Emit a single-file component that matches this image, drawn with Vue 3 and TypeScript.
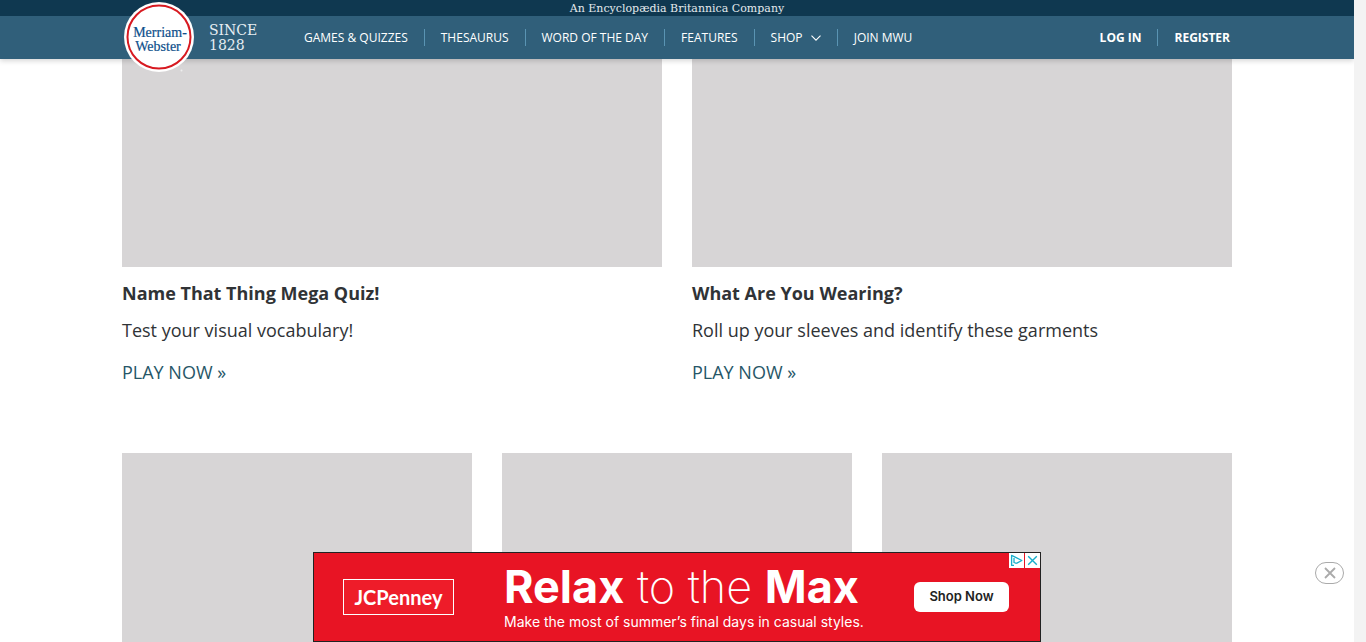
<script setup lang="ts">
import { ref } from 'vue'

interface Quiz {
  title: string
  text: string
}

const links: string[] = ['Games & Quizzes', 'Thesaurus', 'Word of the Day', 'Features', 'Shop', 'Join MWU']
const quizzes: Quiz[] = [
  { title: 'Name That Thing Mega Quiz!', text: 'Test your visual vocabulary!' },
  { title: 'What Are You Wearing?', text: 'Roll up your sleeves and identify these garments' },
]
const adOpen = ref<boolean>(true)
</script>

<template>
  <div class="page">
    <header class="header">
      <div class="tagline">An Encyclopædia Britannica Company</div>
      <div class="bar">
        <div class="inner">
          <a class="brand" href="#" aria-label="Merriam-Webster, since 1828">
            <svg class="logo" viewBox="0 0 70 72" width="70" height="72" aria-hidden="true">
              <circle cx="35" cy="35" r="35" fill="#fff" />
              <circle cx="35" cy="35" r="31.5" fill="#fff" stroke="#d71920" stroke-width="2" />
              <text x="36" y="35" text-anchor="middle" class="logo-text">Merriam-</text>
              <text x="34" y="49" text-anchor="middle" class="logo-text">Webster</text>
              <circle cx="57.500" cy="68.500" r="1" fill="#eee" />
            </svg>
            <span class="since">SINCE<br />1828</span>
          </a>
          <nav class="nav" aria-label="Main">
            <a v-for="link in links" :key="link" href="#">
              {{ link }}
              <svg v-if="link === 'Shop'" class="chevron" viewBox="0 0 10 6" width="10" height="6" aria-hidden="true">
                <path d="M.5 .6 5 5.2 9.5 .6" fill="none" stroke="#fff" stroke-width="1.1" />
              </svg>
            </a>
          </nav>
          <nav class="nav account" aria-label="Account">
            <a href="#">Log In</a>
            <a href="#">Register</a>
          </nav>
        </div>
      </div>
    </header>

    <main class="content">
      <section class="row pair">
        <article v-for="quiz in quizzes" :key="quiz.title">
          <div class="picture wide"></div>
          <h2>{{ quiz.title }}</h2>
          <p>{{ quiz.text }}</p>
          <a class="play" href="#">PLAY NOW »</a>
        </article>
      </section>
      <section class="row triple">
        <div v-for="n in 3" :key="n" class="picture"></div>
      </section>
    </main>

    <aside v-if="adOpen" class="ad" aria-label="Advertisement">
      <div class="ad-brand">JCPenney</div>
      <div class="ad-copy">
        <div class="ad-head"><b>Relax</b> to the <b>Max</b></div>
        <div class="ad-sub">Make the most of summer’s final days in casual styles.</div>
      </div>
      <a class="shop" href="#">Shop Now</a>
      <div class="choices">
        <button type="button" aria-label="About this ad">
          <svg viewBox="0 0 15 15" width="15" height="15">
            <path d="M5 12.300H2.600V2.300L12.800 7.500 7.400 10.300M5 5V9.500L7.400 10.300" fill="none" stroke="#17aecb" stroke-width="1.3" stroke-linejoin="round" />
          </svg>
        </button>
        <button type="button" aria-label="Close ad" @click="adOpen = false">
          <svg viewBox="0 0 15 15" width="15" height="15">
            <path d="m3.2 3.2 8.6 8.6m0-8.6-8.6 8.6" fill="none" stroke="#17aecb" stroke-width="1.4" />
          </svg>
        </button>
      </div>
    </aside>
    <button v-if="adOpen" class="dismiss" type="button" aria-label="Dismiss" @click="adOpen = false">
      <svg viewBox="0 0 12 12" width="12" height="12">
        <path d="m1 1 10 10M11 1 1 11" fill="none" stroke="#aaa" stroke-width="1.8" />
      </svg>
    </button>
  </div>
</template>

<style>
body {
  background: #f3f3f3;
}
</style>

<style scoped>
.page {
  position: relative;
  height: 100vh;
  margin-right: 12px;
  overflow: hidden;
  background: #fff;
  color: #303336;
  font-family: "Open Sans", sans-serif;
}
.page * {
  box-sizing: border-box;
}
a {
  color: inherit;
  text-decoration: none;
}
.header {
  position: relative;
  z-index: 2;
  color: #fff;
  box-shadow: 0 2px 5px rgba(0, 0, 0, 0.16);
}
.tagline {
  height: 16px;
  background: #0f3850;
  color: #e4eaed;
  font: 11px/18px "DejaVu Serif", serif;
  text-align: center;
}
.bar {
  height: 43px;
  background: #305f7a;
}
.inner,
.content {
  width: calc(100% - 40px);
  max-width: 1110px;
  margin: 0 auto;
}
.inner {
  display: flex;
  align-items: center;
  height: 43px;
}
.brand {
  display: flex;
  align-items: center;
  gap: 15px;
  width: 166px;
  padding-left: 2px;
}
.logo {
  flex: none;
}
.logo-text {
  fill: #0d4f8b;
  stroke: #0d4f8b;
  stroke-width: 0.2;
  font: 14px "Liberation Serif", serif;
}
.since {
  color: #e7eef2;
  font: 14px/15px "DejaVu Serif", serif;
}
.nav {
  display: flex;
  font-size: 12px;
  line-height: 17px;
  text-transform: uppercase;
}
.nav a {
  padding: 0 16px;
  white-space: nowrap;
}
.nav a + a {
  border-left: 1px solid #5a94b3;
}
.chevron {
  margin-left: 5px;
  vertical-align: 1px;
}
.account {
  margin-left: auto;
  margin-right: -14px;
  font-weight: 700;
}
.row {
  display: grid;
  gap: 30px;
}
.pair {
  grid-template-columns: repeat(2, 1fr);
}
.triple {
  grid-template-columns: repeat(3, 1fr);
  margin-top: 68px;
}
.picture {
  aspect-ratio: 16 / 9;
  background: #d7d5d6;
}
.wide {
  aspect-ratio: 540 / 208;
}
h2 {
  margin: 14px 0 0;
  font-size: 18px;
  line-height: 25px;
}
p {
  margin: 12px 0 17px;
  font-size: 18px;
  line-height: 25px;
}
.play {
  display: block;
  color: #265667;
  font-size: 18px;
  line-height: 25px;
}
.ad {
  position: absolute;
  bottom: 0;
  left: 50%;
  z-index: 3;
  display: flex;
  align-items: center;
  width: 728px;
  height: 90px;
  padding: 0 31px 0 29px;
  transform: translateX(-50%);
  border: 1px solid #222;
  background: #e81424;
  color: #fff;
  font-family: Inter, sans-serif;
}
.ad-brand {
  width: 111px;
  height: 36px;
  border: 1px solid #fff;
  background: #ee1c29;
  font: 700 20px/34px Lato, sans-serif;
  text-align: center;
}
.ad-copy {
  margin-left: 50px;
}
.ad-head {
  font-size: 45px;
  font-weight: 200;
  line-height: 50px;
  white-space: nowrap;
}
.ad-head b {
  font-weight: 700;
}
.ad-sub {
  font-size: 14px;
  line-height: 20px;
  white-space: nowrap;
}
.shop {
  width: 95px;
  height: 30px;
  margin-left: auto;
  border-radius: 6px;
  background: #fff;
  color: #222;
  font-size: 13px;
  font-weight: 600;
  line-height: 29px;
  text-align: center;
}
.choices {
  position: absolute;
  top: 0;
  right: 0;
  display: flex;
  gap: 1px;
}
.choices button {
  display: flex;
  padding: 0;
  border: 0;
  background: #fff;
}
.dismiss {
  position: absolute;
  right: 10px;
  bottom: 58px;
  display: flex;
  align-items: center;
  justify-content: center;
  width: 29px;
  height: 22px;
  padding: 0;
  border: 1px solid #aaa;
  border-radius: 11px;
  background: #fff;
}
</style>
